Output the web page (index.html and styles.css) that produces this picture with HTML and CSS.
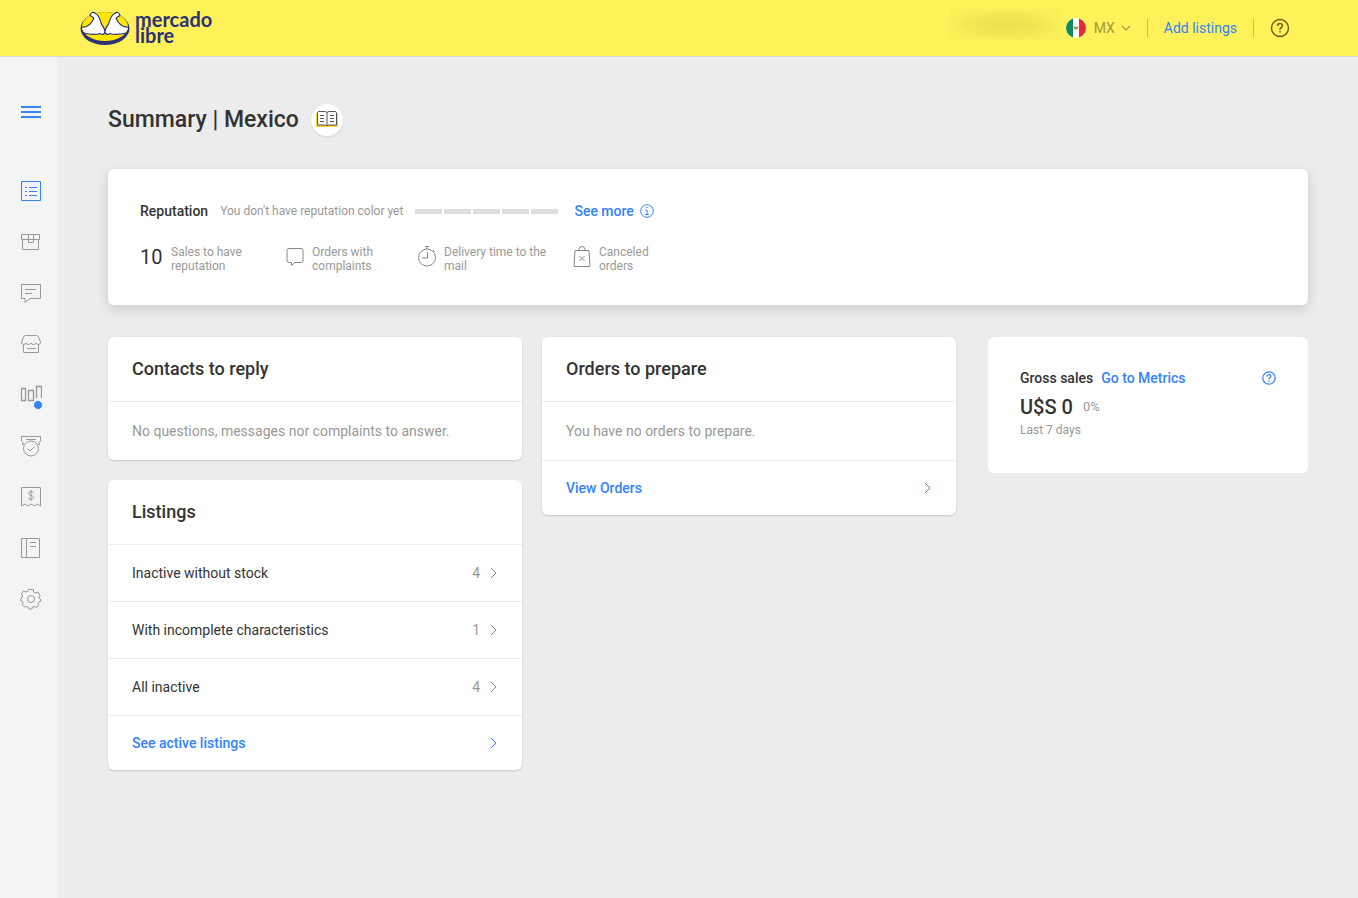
FILE: index.html
```html
<!DOCTYPE html>
<html lang="en">
<head>
<meta charset="utf-8">
<meta name="viewport" content="width=device-width, initial-scale=1">
<title>Summary | Mexico</title>
<link rel="stylesheet" href="styles.css">
</head>
<body>
<header class="topbar">
  <a class="logo" href="#" aria-label="mercado libre">
    <svg class="logo-mark" width="50" height="36" viewBox="0 0 50 36" aria-hidden="true">
      <ellipse cx="25" cy="18.500" rx="24.500" ry="16.500" fill="#2d3277"/>
      <ellipse cx="25" cy="16.500" rx="23" ry="14.500" fill="#ffe600"/>
      <path d="M2 17C7 17.500 11 15 14 8L10.500 5.500Q12 1.500 15 3.500C19 5 20 9 21.500 13C23 16.500 24.500 18 25 20.500C25.500 18 27 16.500 28.500 13C30 9 31 5 35 3.500Q38 1.500 39.500 5.500L36 8C39 15 43 17.500 48 17Q48 21 44 23.500Q35 25.500 29 23.500Q26 25.500 25 23Q24 25.500 21 23.500Q15 25.500 6 23.500Q2 21 2 17Z" fill="#fff"/>
      <path d="M2 17C7 17.500 11 15 14 8M21 13C22.500 16.500 25 18 25 22C25 18 27.500 16.500 29 13M36 8C39 15 43 17.500 48 17M14 8L10 5.500Q12 .5 15.500 3.500C19 5 20 9 21.500 14M28.500 14C30 9 31 5 34.500 3.500Q38 .5 40 5.500L36 8M4 23Q14 25.500 20 23.500Q24 26 25 22Q26 26 30 23.500Q36 25.500 46 23" fill="none" stroke="#2d3277" stroke-width="1.200"/>
    </svg>
    <span class="logo-text"><span>mercado</span><span>libre</span></span>
  </a>
  <nav class="top-nav" aria-label="Account">
    <span class="user-name"></span>
    <button class="country" type="button">
      <svg width="20" height="20" viewBox="0 0 20 20" aria-hidden="true">
        <clipPath id="round"><circle cx="10" cy="10" r="10"/></clipPath>
        <g clip-path="url(#round)"><path fill="#fff" d="M0 0h20v20H0z"/><path fill="#128a60" d="M0 0h7v20H0z"/><path fill="#ea2839" d="M13 0h7v20h-7z"/></g>
        <path d="M7.500 9q1.500-1 2.500 0q1-1 2.500 0l-1 2q-1.500 1-3 0z" fill="#a48a62"/>
      </svg>
      <span>MX</span>
      <svg class="caret" width="10" height="6" viewBox="0 0 10 6" fill="none" stroke="currentColor" stroke-width="1.200" aria-hidden="true"><path d="M1 1l4 4 4-4"/></svg>
    </button>
    <a class="add-link" href="#">Add listings</a>
    <button class="help" type="button" aria-label="Help">
      <svg width="20" height="20" viewBox="0 0 20 20" fill="none" stroke="currentColor" stroke-width="1.400" aria-hidden="true"><circle cx="10" cy="10" r="8.500"/><path d="M7.500 8C7.500 4.500 12.500 4.700 12.500 7.700C12.500 9.500 10 9.300 10 11.700M10 13v1.600" stroke-width="1.500"/></svg>
    </button>
  </nav>
</header>
<div class="layout">
  <aside class="sidebar">
    <button class="side-item menu" type="button" aria-label="Menu"><svg width="20" height="14" viewBox="0 0 20 14" fill="#3483fa"><path d="M0 1h20v2H0zM0 6h20v2H0zM0 11h20v2H0z"/></svg></button>
    <nav class="side-nav" aria-label="Sections">
      <a class="side-item active" href="#" aria-label="Summary"><svg class="icon" viewBox="0 0 22 22"><path d="M1.500 1.500h19v19h-19zM5 7.500h2M5 11.500h2M5 15.500h2M9 7.500h8M9 11.500h8M9 15.500h8"/></svg></a>
      <a class="side-item" href="#" aria-label="Listings"><svg class="icon" viewBox="0 0 22 22"><path d="M1.500 3.500h18v5h-18zM2.500 8.500v10h16v-10M8.500 3.500v8h5v-8"/></svg></a>
      <a class="side-item" href="#" aria-label="Questions"><svg class="icon" viewBox="0 0 22 22"><path d="M1.500 2.500h19v14H10l-5 4v-4H1.500zM5 7.500h11M5 11.500h7"/></svg></a>
      <a class="side-item" href="#" aria-label="Shop"><svg class="icon" viewBox="0 0 22 22"><path d="M5.500 2.500h11q1.500 0 2 1.500l2 5q.5 2-2 2.500q-2 0-2.500-1.500q-.5 1.500-2.500 1.500T11 10q-.5 1.500-2.500 1.500T6 10q-.5 1.500-2.500 1.500q-2.500-.5-2-2.500l2-5q.5-1.500 2-1.500zM3.500 11.500v8h15v-8M7 15.500h9"/></svg></a>
      <a class="side-item" href="#" aria-label="Metrics"><svg class="icon" viewBox="0 0 22 22" stroke-width="1.300"><path d="M1.500 4.500h4v12h-4zM8.500 6.500h5v10h-5zM16.500 14V2.500h5V14"/></svg><span class="dot"></span></a>
      <a class="side-item" href="#" aria-label="Reputation"><svg class="icon" viewBox="0 0 22 22"><path d="M4 9.500H2.500L3 7.500 1.500 6v-4.500h19V6L19 7.500l.5 2H18M6 4.500h10"/><circle cx="11" cy="13.500" r="7.500"/><path d="M7.500 13.500l2.500 2.500 4.500-4.500"/></svg></a>
      <a class="side-item" href="#" aria-label="Billing"><svg class="icon" viewBox="0 0 22 22"><path d="M1.500 20V1.500h19V20l-3-2-3 2-3.500-2-3 2-3-2zM13.500 7q-.5-1.500-2.500-1.500c-3 0-3.500 3.500 0 4s3.500 4 0 4q-2.500 0-2.500-2M11 4v11"/></svg></a>
      <a class="side-item" href="#" aria-label="Learning"><svg class="icon" viewBox="0 0 22 22"><path d="M1.500 1.500h18v19h-18zM6.500 1.500v19M10 5.500h6M10 9.500h6"/></svg></a>
      <a class="side-item" href="#" aria-label="Settings"><svg class="icon" viewBox="0 0 22 22"><path d="M8.500 1.500h5v2.500l2 1 2.500-1 2 3.500-1 1.500v1l1.500 1v2.500l-1.500.5-1 1.500.5 2-2.500 2-2-1-1.500.5-.5 2H9l-1-2-1.500-.5-2 .5-2.500-2.500 1-1.500-.5-1.500-1.500-.5v-3l1.500-1v-1l-1-2 2-3 2.500 1 2-1z"/><circle cx="11" cy="11" r="3.500"/></svg></a>
    </nav>
  </aside>
  <main class="content">
    <div class="page-head">
      <h1 class="page-title">Summary | Mexico</h1>
      <button class="guide" type="button" aria-label="Guide">
        <svg width="22" height="18" viewBox="0 0 22 18" aria-hidden="true"><path d="M0 3h22v14H0z" fill="#fbcf2d"/><path d="M1.500 2.500Q2 1.500 3 1.500h6.500l1.500 1 1.500-1H19q1 0 1.500 1v12.500h-8L11 16l-1.500-1h-8z" fill="#fff" stroke="#555"/><path d="M11 2.500V16M4 5.500h4M4 8.500h4M4 11.500h4M14 5.500h4M14 8.500h4M14 11.500h4" stroke="#555" fill="none"/></svg>
      </button>
    </div>
    <section class="card reputation">
      <div class="rep-head">
        <h2 class="small-title">Reputation</h2>
        <span class="rep-note">You don't have reputation color yet</span>
        <span class="meter"><i></i><i></i><i></i><i></i><i></i></span>
        <a class="link see-more" href="#">See more
          <svg width="14" height="14" viewBox="0 0 14 14" fill="none" stroke="currentColor" aria-hidden="true"><circle cx="7" cy="7" r="6.300"/><path d="M5.500 6H7v4.500M5.200 10.500h3.600M6.300 3.500h1.400"/></svg></a>
      </div>
      <ul class="stats">
        <li><span class="count">10</span><span>Sales to have<br>reputation</span></li>
        <li><svg class="stat-icon" viewBox="0 0 20 22"><path d="M4 3.500h12q2 0 2 2v10q0 2-2 2H10l-3.500 3v-3H4q-2 0-2-2v-10q0-2 2-2z"/></svg><span>Orders with<br>complaints</span></li>
        <li><svg class="stat-icon" viewBox="0 0 20 22"><circle cx="10" cy="12.500" r="8.500"/><path d="M10 1v3M8 1.500h4M10.500 7v6H5M16 5l1.500 1.500"/></svg><span>Delivery time to the<br>mail</span></li>
        <li><svg class="stat-icon" viewBox="0 0 20 22"><path d="M3 5.500h14l1 16H2zM6.500 5.500Q7 1.500 10 1.500t3.500 4M7.500 11l5 5M12.500 11l-5 5"/></svg><span>Canceled<br>orders</span></li>
      </ul>
    </section>
    <div class="board">
      <div class="column">
        <section class="card">
          <h2 class="card-title">Contacts to reply</h2>
          <p class="empty">No questions, messages nor complaints to answer.</p>
        </section>
        <section class="card">
          <h2 class="card-title">Listings</h2>
          <a class="row" href="#"><span>Inactive without stock</span><span class="amount">4</span><svg class="chevron" viewBox="0 0 8 12"><path d="M1 1l5 5-5 5"/></svg></a>
          <a class="row" href="#"><span>With incomplete characteristics</span><span class="amount">1</span><svg class="chevron" viewBox="0 0 8 12"><path d="M1 1l5 5-5 5"/></svg></a>
          <a class="row" href="#"><span>All inactive</span><span class="amount">4</span><svg class="chevron" viewBox="0 0 8 12"><path d="M1 1l5 5-5 5"/></svg></a>
          <a class="row action" href="#"><span>See active listings</span><svg class="chevron" viewBox="0 0 8 12"><path d="M1 1l5 5-5 5"/></svg></a>
        </section>
      </div>
      <div class="column">
        <section class="card">
          <h2 class="card-title">Orders to prepare</h2>
          <p class="empty">You have no orders to prepare.</p>
          <a class="row action" href="#"><span>View Orders</span><svg class="chevron" viewBox="0 0 8 12"><path d="M1 1l5 5-5 5"/></svg></a>
        </section>
      </div>
      <section class="card sales">
        <div class="sales-head">
          <h2 class="small-title">Gross sales</h2>
          <a class="link" href="#">Go to Metrics</a>
          <button class="sales-help" type="button" aria-label="About gross sales"><svg width="14" height="14" viewBox="0 0 14 14" fill="none" stroke="currentColor" stroke-width="1.200" aria-hidden="true"><circle cx="7" cy="7" r="6.200"/><path d="M5.200 5.500C5.200 3 8.800 3.200 8.800 5.300C8.800 6.700 7 6.500 7 8.300M7 9.300v1.400"/></svg></button>
        </div>
        <p class="sales-value"><strong>U$S 0</strong><span>0%</span></p>
        <p class="period">Last 7 days</p>
      </section>
    </div>
  </main>
</div>
</body>
</html>
```
FILE: styles.css
```css
* { box-sizing: border-box; }
body {
  display: flex;
  flex-direction: column;
  min-height: 100vh;
  margin: 0;
  background: #ececec;
  color: #333;
  font: 14px/18px Roboto, "Liberation Sans", sans-serif;
}
h1, h2, p, ul { margin: 0; padding: 0; }
h1, h2 { font-weight: 500; }
a { color: inherit; text-decoration: none; }
button { padding: 0; border: 0; background: none; color: inherit; font: inherit; cursor: pointer; }
svg { display: block; flex: none; }

.topbar {
  display: flex;
  align-items: center;
  justify-content: space-between;
  height: 57px;
  padding: 0 68px 0 80px;
  border-bottom: 1px solid #d9d9d0;
  background: #fff159;
}
.logo { display: flex; align-items: center; gap: 5px; }
.logo-text {
  display: grid;
  padding-bottom: 2px;
  color: #2d3277;
  font: 700 20px/16px Lato, sans-serif;
}
.top-nav { display: flex; align-items: center; }
.user-name {
  width: 111px;
  height: 32px;
  margin: 0 5px 6px 0;
  background: radial-gradient(closest-side, #eddf50, #f2e453 50%, #fcee58);
}
.country { display: flex; align-items: center; gap: 8px; color: #a39a39; }
.caret { margin-left: -2px; }
.add-link {
  margin: 0 16px;
  padding: 0 16px;
  border: solid #c9bf4c;
  border-width: 0 1px;
  color: #3483fa;
}
.help { color: #665f1c; }

.layout { display: flex; flex: 1; }
.sidebar { flex: none; width: 58px; padding: 29px 0 0 4px; background: #f4f4f4; border-right: 1px solid #efefef; }
.side-item {
  position: relative;
  display: flex;
  align-items: center;
  justify-content: center;
  width: 100%;
  height: 51px;
  color: #999;
}
.menu { margin-bottom: 28px; }
.active { color: #3483fa; }
.icon { width: 22px; height: 22px; fill: none; stroke: currentColor; }
.dot {
  position: absolute;
  right: 14px;
  bottom: 10px;
  width: 10px;
  height: 10px;
  border: 1px solid #f4f4f4;
  border-radius: 50%;
  background: #3483fa;
}

.content { flex: 1; min-width: 0; padding: 47px 50px; }
.page-head { display: flex; align-items: center; gap: 12px; margin-bottom: 33px; }
.page-title { font-size: 23px; line-height: 32px; }
.guide {
  display: grid;
  place-items: center;
  width: 32px;
  height: 32px;
  padding-bottom: 2px;
  border-radius: 50%;
  background: #fff;
  box-shadow: 0 1px 3px rgba(0, 0, 0, .1);
}
.card { border-radius: 6px; background: #fff; box-shadow: 0 1px 2px rgba(0, 0, 0, .15); }
.small-title { font-size: 14px; line-height: 20px; }
.link { color: #3483fa; font-weight: 500; }

.reputation { padding: 32px; box-shadow: 0 4px 12px rgba(0, 0, 0, .14); }
.rep-head { display: flex; align-items: center; gap: 12px; }
.rep-note { color: #999; font-size: 12px; }
.meter { display: flex; gap: 2px; }
.meter i { width: 27px; height: 5px; background: #ddd; }
.see-more { display: flex; align-items: center; gap: 6px; margin-left: 4px; }
.stats {
  display: grid;
  grid-template-columns: 145px 132px 155px 1fr;
  margin-top: 24px;
  color: #999;
  font-size: 12px;
  line-height: 14px;
  list-style: none;
}
.stats li { display: flex; gap: 7px; }
.count { width: 24px; color: #333; font-size: 20px; line-height: 24px; }
.stat-icon { width: 20px; height: 22px; fill: none; stroke: #888; }

.board {
  display: grid;
  grid-template-columns: minmax(0, 1fr) minmax(0, 1fr) 332px;
  align-items: start;
  gap: 20px;
  margin-top: 32px;
}
.column { display: grid; gap: 20px; }
.card-title { padding: 20px 24px; font-size: 18px; line-height: 24px; }
.empty {
  padding: 20px 24px;
  border-top: 1px solid #ececec;
  color: #999;
}
.row {
  display: flex;
  align-items: center;
  gap: 10px;
  height: 57px;
  padding: 0 24px;
  border-top: 1px solid #ececec;
}
.row span:first-child { flex: 1; }
.amount { color: #999; }
.chevron { width: 8px; height: 12px; fill: none; stroke: #888; }
.action { height: 55px; color: #3483fa; font-weight: 500; }
.action .chevron { stroke: currentColor; }

.sales { margin-left: 12px; padding: 32px 32px 36px; box-shadow: none; }
.sales-head { display: flex; align-items: center; gap: 8px; height: 18px; }
.sales-help { margin-left: auto; color: #3483fa; }
.sales-value { display: flex; align-items: center; gap: 10px; margin: 8px 0 4px; }
.sales-value strong { font-size: 20px; font-weight: 500; line-height: 24px; }
.sales-value span { color: #999; font-size: 13px; }
.period { color: #999; font-size: 12px; line-height: 14px; }
```
